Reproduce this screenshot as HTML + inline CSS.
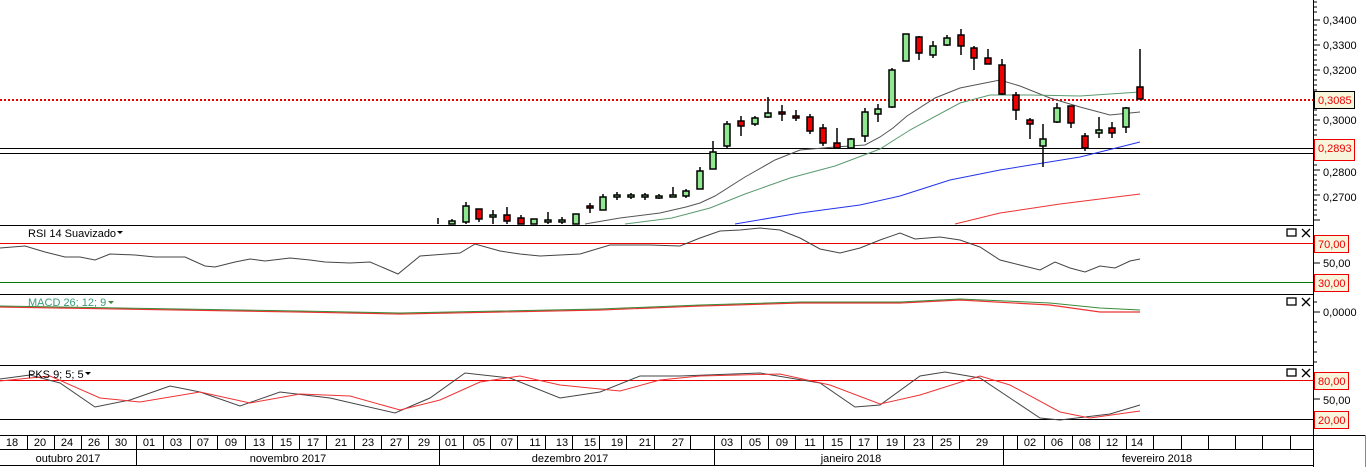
<!DOCTYPE html>
<html><head><meta charset="utf-8"><style>
html,body{margin:0;padding:0;background:#fff;}
svg{display:block;font-family:"Liberation Sans",sans-serif;}
</style></head><body>
<svg width="1366" height="467" viewBox="0 0 1366 467" xmlns="http://www.w3.org/2000/svg">
<rect width="1366" height="467" fill="#fff"/>
<!-- reference lines main -->
<line x1="0" y1="100" x2="1313" y2="100" stroke="#e00" stroke-width="2" stroke-dasharray="2,2"/>
<line x1="0" y1="148.5" x2="1313" y2="148.5" stroke="#000"/>
<line x1="0" y1="153.5" x2="1313" y2="153.5" stroke="#000"/>
<!-- MAs -->
<polyline fill="none" stroke="#555" stroke-width="1" points="585,224 620,218 660,213 686,207 700,203 715,196 745,177 775,160 800,150 835,147 865,145 880,137 893,128 907,116 935,98 960,88 990,82 1000,80 1020,86 1050,98 1080,107 1110,115 1140,112"/>
<polyline fill="none" stroke="#5a9a70" stroke-width="1" points="625,224 672,218 710,208 745,194 790,178 835,166 880,149 910,130 960,103 990,95 1030,95 1080,96 1140,92"/>
<polyline fill="none" stroke="#2233ee" stroke-width="1" points="735,224 800,213 860,205 900,196 950,180 1000,170 1080,157 1140,142"/>
<polyline fill="none" stroke="#e33" stroke-width="1" points="955,224 1000,213 1060,204 1140,194"/>
<!-- candles -->
<g stroke="#000" stroke-width="1.5">
<line x1="438" y1="218" x2="438" y2="224"/>
<line x1="452" y1="219" x2="452" y2="224"/><rect x="449" y="221" width="6" height="3" fill="#90e890"/>
<line x1="466" y1="202" x2="466" y2="224"/><rect x="463" y="206" width="6" height="16" fill="#90e890"/>
<line x1="479" y1="209" x2="479" y2="222"/><rect x="476" y="209" width="6" height="10" fill="#e00"/>
<line x1="493" y1="210" x2="493" y2="224"/><rect x="490" y="215" width="6" height="2" fill="#90e890"/>
<line x1="507" y1="207" x2="507" y2="224"/><rect x="504" y="215" width="6" height="6" fill="#e00"/>
<line x1="521" y1="215" x2="521" y2="224"/><rect x="518" y="218" width="6" height="6" fill="#e00"/>
<rect x="531" y="219" width="6" height="5" fill="#90e890"/>
<line x1="548" y1="212" x2="548" y2="224"/><rect x="545" y="220" width="6" height="2" fill="#90e890"/>
<line x1="562" y1="217" x2="562" y2="224"/><rect x="559" y="220" width="6" height="2" fill="#90e890"/>
<rect x="573" y="214" width="6" height="10" fill="#90e890"/>
<line x1="590" y1="203" x2="590" y2="213"/><rect x="587" y="206" width="6" height="2" fill="#e00"/>
<line x1="603" y1="194" x2="603" y2="210"/><rect x="600" y="197" width="6" height="13" fill="#90e890"/>
<line x1="617" y1="192" x2="617" y2="200"/><rect x="614" y="195" width="6" height="2" fill="#90e890"/>
<line x1="631" y1="193" x2="631" y2="199"/><rect x="628" y="195" width="6" height="2" fill="#90e890"/>
<line x1="645" y1="193" x2="645" y2="200"/><rect x="642" y="195" width="6" height="2" fill="#90e890"/>
<line x1="659" y1="194" x2="659" y2="199"/><rect x="656" y="196" width="6" height="2" fill="#90e890"/>
<line x1="673" y1="187" x2="673" y2="197"/><rect x="670" y="195" width="6" height="2" fill="#90e890"/>
<line x1="686" y1="189" x2="686" y2="198"/><rect x="683" y="191" width="6" height="5" fill="#90e890"/>
<line x1="700" y1="167" x2="700" y2="189"/><rect x="697" y="171" width="6" height="18" fill="#90e890"/>
<line x1="713" y1="141" x2="713" y2="169"/><rect x="710" y="152" width="6" height="17" fill="#90e890"/>
<line x1="727" y1="121" x2="727" y2="148"/><rect x="724" y="124" width="6" height="22" fill="#90e890"/>
<line x1="741" y1="116" x2="741" y2="136"/><rect x="738" y="121" width="6" height="5" fill="#e00"/>
<line x1="755" y1="116" x2="755" y2="126"/><rect x="752" y="118" width="6" height="6" fill="#90e890"/>
<line x1="768" y1="97" x2="768" y2="118"/><rect x="765" y="113" width="6" height="4" fill="#90e890"/>
<line x1="782" y1="105" x2="782" y2="121"/><rect x="779" y="112" width="6" height="2" fill="#e00"/>
<line x1="796" y1="110" x2="796" y2="121"/><rect x="793" y="116" width="6" height="2" fill="#e00"/>
<line x1="810" y1="114" x2="810" y2="134"/><rect x="807" y="117" width="6" height="14" fill="#e00"/>
<line x1="823" y1="124" x2="823" y2="146"/><rect x="820" y="128" width="6" height="15" fill="#e00"/>
<line x1="837" y1="128" x2="837" y2="148"/><rect x="834" y="143" width="6" height="5" fill="#e00"/>
<line x1="851" y1="138" x2="851" y2="148"/><rect x="848" y="139" width="6" height="9" fill="#90e890"/>
<line x1="865" y1="108" x2="865" y2="142"/><rect x="862" y="112" width="6" height="24" fill="#90e890"/>
<line x1="878" y1="104" x2="878" y2="122"/><rect x="875" y="109" width="6" height="5" fill="#90e890"/>
<line x1="892" y1="68" x2="892" y2="108"/><rect x="889" y="70" width="6" height="37" fill="#90e890"/>
<rect x="903" y="34" width="6" height="27" fill="#90e890"/>
<line x1="919" y1="36" x2="919" y2="60"/><rect x="916" y="37" width="6" height="16" fill="#e00"/>
<line x1="933" y1="41" x2="933" y2="58"/><rect x="930" y="46" width="6" height="9" fill="#90e890"/>
<line x1="947" y1="35" x2="947" y2="46"/><rect x="944" y="38" width="6" height="7" fill="#90e890"/>
<line x1="961" y1="29" x2="961" y2="55"/><rect x="958" y="35" width="6" height="11" fill="#e00"/>
<line x1="974" y1="46" x2="974" y2="70"/><rect x="971" y="48" width="6" height="10" fill="#e00"/>
<line x1="988" y1="49" x2="988" y2="64"/><rect x="985" y="58" width="6" height="6" fill="#e00"/>
<line x1="1002" y1="59" x2="1002" y2="95"/><rect x="999" y="65" width="6" height="29" fill="#e00"/>
<line x1="1016" y1="92" x2="1016" y2="120"/><rect x="1013" y="95" width="6" height="15" fill="#e00"/>
<line x1="1030" y1="118" x2="1030" y2="139"/><rect x="1027" y="120" width="6" height="4" fill="#e00"/>
<line x1="1043" y1="124" x2="1043" y2="167"/><rect x="1040" y="139" width="6" height="7" fill="#90e890"/>
<line x1="1057" y1="103" x2="1057" y2="123"/><rect x="1054" y="108" width="6" height="14" fill="#90e890"/>
<line x1="1071" y1="106" x2="1071" y2="128"/><rect x="1068" y="106" width="6" height="17" fill="#e00"/>
<line x1="1085" y1="133" x2="1085" y2="151"/><rect x="1082" y="136" width="6" height="12" fill="#e00"/>
<line x1="1099" y1="117" x2="1099" y2="138"/><rect x="1096" y="130" width="6" height="3" fill="#90e890"/>
<line x1="1112" y1="122" x2="1112" y2="138"/><rect x="1109" y="128" width="6" height="5" fill="#e00"/>
<line x1="1126" y1="107" x2="1126" y2="133"/><rect x="1123" y="108" width="6" height="19" fill="#90e890"/>
<line x1="1140" y1="49" x2="1140" y2="99"/><rect x="1137" y="87" width="6" height="12" fill="#e00"/>
</g>
<!-- panel separators -->
<g stroke="#000" stroke-width="1">
<line x1="0" y1="225.5" x2="1313" y2="225.5"/>
<line x1="0" y1="294.5" x2="1313" y2="294.5"/>
<line x1="0" y1="365.5" x2="1313" y2="365.5"/>
<line x1="0" y1="435.5" x2="1366" y2="435.5"/>
<line x1="0" y1="449.5" x2="1313" y2="449.5"/>
<line x1="0" y1="465.5" x2="1313" y2="465.5"/>
<line x1="1313.5" y1="0" x2="1313.5" y2="467"/>
<line x1="1365.5" y1="435" x2="1365.5" y2="467" stroke="#888"/>
</g>
<!-- RSI -->
<line x1="0" y1="243.5" x2="1313" y2="243.5" stroke="#e00"/>
<line x1="0" y1="282.5" x2="1313" y2="282.5" stroke="#070"/>
<polyline fill="none" stroke="#444" points="0,248 25,246 45,252 65,257 80,257 95,260 110,254 135,255 155,257 185,257 205,266 215,267 235,262 250,259 265,261 290,258 310,260 325,262 350,263 370,262 398,274 420,256 460,253 475,244 500,251 520,254 540,256 580,254 610,245 650,245 680,246 700,238 720,231 740,230 760,228 780,230 800,238 820,249 840,253 860,248 880,240 900,233 915,239 940,237 960,240 980,247 1000,260 1020,265 1040,270 1055,262 1070,268 1085,272 1100,266 1115,268 1130,261 1140,259"/>
<text x="28" y="237" font-size="11">RSI 14 Suavizado</text><path d="M117 231h6l-3 3z"/>
<!-- MACD -->
<polyline fill="none" stroke="#e33" stroke-width="1.2" points="0,307 300,312 400,314 500,312 600,310 700,306 800,303 900,303 960,300 1050,305 1100,312 1140,312"/>
<polyline fill="none" stroke="#3a8a3a" stroke-width="1" points="0,306 300,311 400,313 500,311 600,309 700,305 800,302 900,302 960,299 1050,303 1100,308 1140,310"/>
<text x="28" y="306" font-size="11" fill="#3a9a7a">MACD 26; 12; 9</text><path d="M108 301h6l-3 3z" fill="#3a8a3a"/>
<!-- PKS -->
<line x1="0" y1="380.5" x2="1313" y2="380.5" stroke="#e00"/>
<line x1="0" y1="419.5" x2="1313" y2="419.5" stroke="#000"/>
<polyline fill="none" stroke="#444" points="0,379 30,375 60,383 95,407 130,400 170,386 200,392 240,406 280,392 330,398 395,413 430,398 465,373 510,378 560,398 600,392 640,376 680,376 760,373 820,383 855,407 880,405 920,376 945,372 980,378 1040,418 1060,420 1110,414 1140,405"/>
<polyline fill="none" stroke="#e33" points="0,381 50,376 100,398 140,402 200,392 250,403 300,394 350,396 400,410 440,400 480,382 520,376 560,385 620,391 660,380 700,376 780,374 830,385 880,404 920,395 980,376 1010,385 1060,412 1090,418 1140,411"/>
<text x="28" y="378" font-size="11">PKS 9; 5; 5</text><path d="M85 372h6l-3 3z"/>
<!-- window icons -->
<g fill="none" stroke="#000" stroke-width="1.3">
<rect x="1287" y="229" width="9" height="7"/><path d="M1302 229l8 8M1310 229l-8 8"/>
<rect x="1287" y="298" width="9" height="7"/><path d="M1302 298l8 8M1310 298l-8 8"/>
<rect x="1287" y="369" width="9" height="7"/><path d="M1302 369l8 8M1310 369l-8 8"/>
</g>
<!-- right axis ticks -->
<g stroke="#000">
<path d="M1314 20h6M1314 45h6M1314 70h6M1314 95h6M1314 120h6M1314 145h6M1314 170h6M1314 195h6M1314 220h6"/>
<path d="M1314 2h3M1314 7h3M1314 12h3M1314 25h3M1314 30h3M1314 35h3M1314 40h3M1314 50h3M1314 55h3M1314 60h3M1314 65h3M1314 75h3M1314 80h3M1314 85h3M1314 90h3M1314 105h3M1314 110h3M1314 115h3M1314 125h3M1314 130h3M1314 135h3M1314 140h3M1314 160h3M1314 165h3M1314 175h3M1314 180h3M1314 185h3M1314 190h3M1314 200h3M1314 205h3M1314 210h3M1314 215h3"/>
<path d="M1314 263h6M1314 312h6M1314 399h6M1314 428h3M1314 302h3M1314 322h3M1314 332h3M1314 342h3M1314 352h3M1314 362h3"/>
</g>
<g font-size="11" fill="#000">
<text x="1323" y="24">0,3400</text><text x="1323" y="49">0,3300</text><text x="1323" y="74">0,3200</text>
<text x="1323" y="124">0,3000</text><text x="1323" y="176">0,2800</text><text x="1323" y="201">0,2700</text>
<text x="1323" y="267">50,00</text><text x="1323" y="316">0,0000</text><text x="1323" y="404">50,00</text>
</g>
<g font-size="11" fill="#e00" stroke-width="1">
<rect x="1314.5" y="91.5" width="40" height="17" fill="#f7f5dc" stroke="#000"/><text x="1318" y="104">0,3085</text>
<rect x="1314.5" y="139.5" width="40" height="21" fill="#f7f5dc" stroke="#e00"/><text x="1318" y="152">0,2893</text>
<rect x="1314.5" y="235.5" width="34" height="17" fill="#f7f5dc" stroke="#e00"/><text x="1318" y="248">70,00</text>
<rect x="1314.5" y="274.5" width="34" height="17" fill="#f7f5dc" stroke="#e00"/><text x="1318" y="287">30,00</text>
<rect x="1314.5" y="372.5" width="34" height="17" fill="#f7f5dc" stroke="#e00"/><text x="1318" y="385">80,00</text>
<rect x="1314.5" y="411.5" width="34" height="17" fill="#f7f5dc" stroke="#e00"/><text x="1318" y="424">20,00</text>
</g>
<!-- date row -->
<g stroke="#000">
<path d="M27.5 435v14M54.5 435v14M81.5 435v14M108.5 435v14M136.5 435v30M163.5 435v14M190.5 435v14M217.5 435v14M245.5 435v14M272.5 435v14M299.5 435v14M326.5 435v14M354.5 435v14M381.5 435v14M408.5 435v14M439.5 435v30M463.5 435v14M490.5 435v14M517.5 435v14M545.5 435v14M572.5 435v14M599.5 435v14M626.5 435v14M654.5 435v14M690.5 435v14M714.5 435v30M741.5 435v14M768.5 435v14M795.5 435v14M823.5 435v14M850.5 435v14M877.5 435v14M904.5 435v14M932.5 435v14M959.5 435v14M1003.5 435v30M1017.5 435v14M1044.5 435v14M1072.5 435v14M1099.5 435v14M1126.5 435v14M1153.5 435v14M1181.5 435v14M1208.5 435v14M1235.5 435v14M1262.5 435v14M1290.5 435v14"/>
</g>
<g font-size="11" fill="#000" text-anchor="middle">
<text x="12" y="446">18</text><text x="40" y="446">20</text><text x="67" y="446">24</text><text x="94" y="446">26</text><text x="121" y="446">30</text>
<text x="149" y="446">01</text><text x="176" y="446">03</text><text x="203" y="446">07</text><text x="231" y="446">09</text><text x="259" y="446">13</text>
<text x="286" y="446">15</text><text x="313" y="446">17</text><text x="341" y="446">21</text><text x="368" y="446">23</text><text x="396" y="446">27</text>
<text x="424" y="446">29</text><text x="451" y="446">01</text><text x="479" y="446">05</text><text x="507" y="446">07</text><text x="535" y="446">11</text>
<text x="562" y="446">13</text><text x="590" y="446">15</text><text x="617" y="446">19</text><text x="645" y="446">21</text><text x="678" y="446">27</text>
<text x="727" y="446">03</text><text x="755" y="446">05</text><text x="782" y="446">09</text><text x="810" y="446">11</text><text x="837" y="446">15</text>
<text x="864" y="446">17</text><text x="892" y="446">19</text><text x="919" y="446">23</text><text x="946" y="446">25</text><text x="982" y="446">29</text>
<text x="1030" y="446">02</text><text x="1057" y="446">06</text><text x="1085" y="446">08</text><text x="1112" y="446">12</text><text x="1137" y="446">14</text>
<text x="68" y="462">outubro 2017</text><text x="288" y="462">novembro 2017</text><text x="570" y="462">dezembro 2017</text>
<text x="851" y="462">janeiro 2018</text><text x="1157" y="462">fevereiro 2018</text>
</g>
</svg>
</body></html>
